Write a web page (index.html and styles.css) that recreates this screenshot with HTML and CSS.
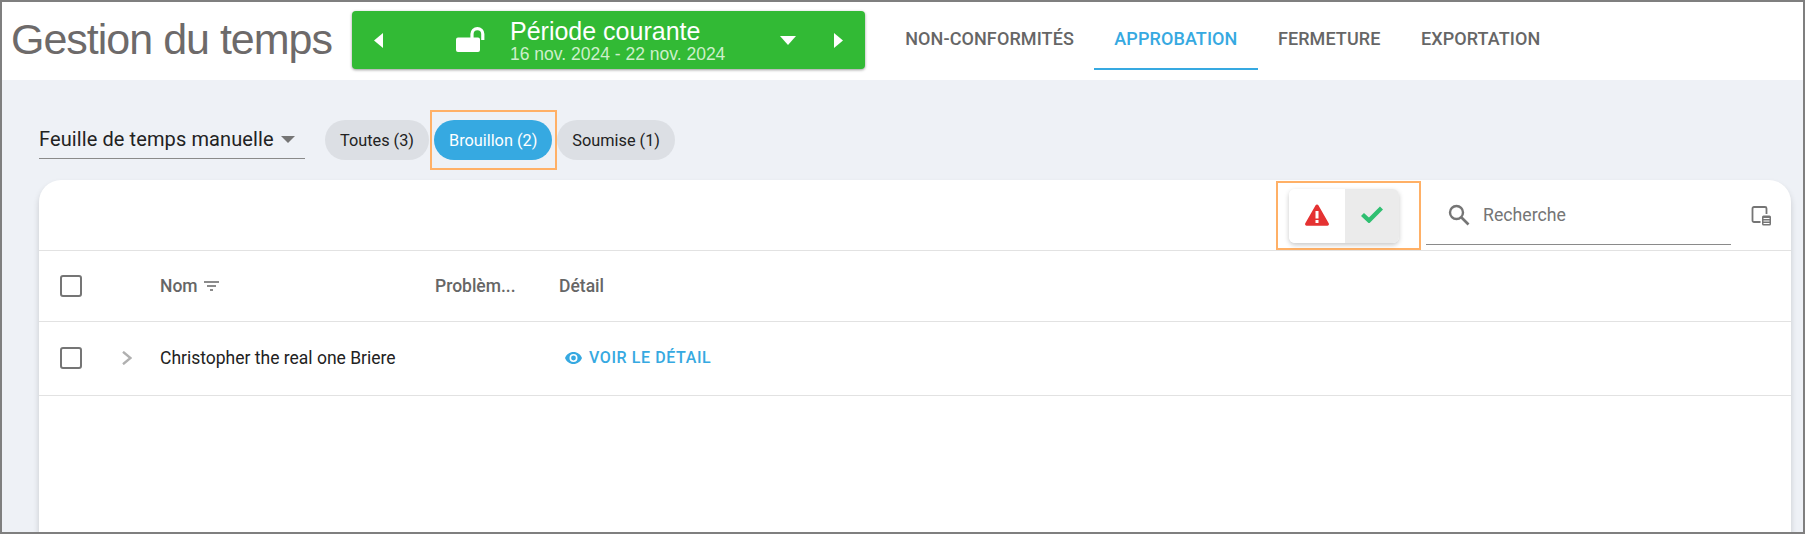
FILE: index.html
```html
<!DOCTYPE html>
<html lang="fr">
	<head>
		<meta charset="UTF-8" />
		<title>Gestion du temps</title>
		<link rel="stylesheet" href="styles.css">
	</head>

	<body>
		<div class="frame">
			<header class="top-bar">
				<h1 class="page-title">Gestion du temps</h1>

				<div class="period">
					<svg class="period-arrow" width="9" height="15" viewBox="0 0 9 15"><path d="M9 0v15L0 7.5z" fill="#fff"/></svg>
					<svg class="period-lock" width="29" height="25" viewBox="0 0 29 25"><path d="M2 10.500h20a2 2 0 0 1 2 2V23a2 2 0 0 1-2 2H2a2 2 0 0 1-2-2V12.500a2 2 0 0 1 2-2z" fill="#fff"/><path d="M16 11V7a5.200 5.200 0 0 1 10.800 0V13" fill="none" stroke="#fff" stroke-width="3.200"/></svg>
					<div class="period-text">
						<div class="period-name">Période courante</div>
						<div class="period-dates">16 nov. 2024 - 22 nov. 2024</div>
					</div>
					<svg class="period-down" width="16" height="9" viewBox="0 0 16 9"><path d="M0 0h16L8 9z" fill="#fff"/></svg>
					<svg class="period-arrow-right" width="9" height="15" viewBox="0 0 9 15"><path d="M0 0v15l9-7.5z" fill="#fff"/></svg>
				</div>

				<nav class="tabs">
					<a class="tab">NON-CONFORMITÉS</a>
					<a class="tab active">APPROBATION</a>
					<a class="tab">FERMETURE</a>
					<a class="tab">EXPORTATION</a>
				</nav>
			</header>

			<main class="content">
				<div class="filters">
					<div class="select">
						<span>Feuille de temps manuelle</span>
						<svg width="14" height="7" viewBox="0 0 14 7"><path d="M0 0h14L7 7z" fill="#757575"/></svg>
					</div>
					<button class="chip">Toutes (3)</button>
					<span class="highlight-box chip-box"><button class="chip chip-active">Brouillon (2)</button></span>
					<button class="chip">Soumise (1)</button>
				</div>

				<section class="card">
					<div class="card-tools">
						<div class="highlight-box tools-box">
							<div class="btn-group">
								<button class="group-btn">
									<svg class="warn-icon" width="24" height="22" viewBox="0 0 24 22"><path d="M12 0.5a1.6 1.6 0 0 1 1.4.8l10.3 18a1.6 1.6 0 0 1-1.4 2.4H1.7a1.6 1.6 0 0 1-1.4-2.4l10.3-18a1.6 1.6 0 0 1 1.4-.8z" fill="#e53232"/><rect x="10.5" y="7" width="3" height="7.5" fill="#fff"/><rect x="10.5" y="16" width="3" height="3" fill="#fff"/></svg>
								</button>
								<button class="group-btn group-btn-on">
									<svg class="check-icon" width="22" height="17" viewBox="0 0 22 17"><path d="M1.500 8.500l6.500 6L20.500 2" fill="none" stroke="#2fbf71" stroke-width="4.400"/></svg>
								</button>
							</div>
						</div>

						<div class="search">
							<svg width="22" height="22" viewBox="0 0 22 22"><circle cx="8.500" cy="8.500" r="6.500" fill="none" stroke="#757575" stroke-width="2.400"/><path d="M13.500 13.500l7 7" stroke="#757575" stroke-width="2.600"/></svg>
							<span>Recherche</span>
						</div>

						<svg class="columns-icon" width="21" height="20" viewBox="0 0 20 20"><path d="M9 16H2.500A1.500 1.500 0 0 1 1 14.500v-12A1.500 1.500 0 0 1 2.500 1h11A1.500 1.500 0 0 1 15 2.500V8" fill="none" stroke="#757575" stroke-width="1.800"/><rect x="10.500" y="9.500" width="9" height="10" rx="1.500" fill="#757575"/><path d="M12 12.500h6M12 15h6M12 17.500h6" stroke="#fff"/></svg>
					</div>

					<div class="table-row table-head">
						<span class="checkbox"></span>
						<span class="cell-name">Nom
							<svg width="15" height="10" viewBox="0 0 15 10"><path d="M0 1h15M3 5h9M6 9h3" stroke="#666" stroke-width="1.500"/></svg>
						</span>
						<span class="cell-problem">Problèm...</span>
						<span class="cell-detail">Détail</span>
					</div>

					<div class="table-row table-body">
						<span class="checkbox"></span>
						<svg class="chevron" width="10" height="14" viewBox="0 0 10 14"><path d="M1 .8L8.500 7 1 13.200" fill="none" stroke="#b0b0b0" stroke-width="2.400"/></svg>
						<span class="cell-name cell-person">Christopher the real one Briere</span>
						<a class="detail-link">
							<svg width="17" height="12" viewBox="0 0 17 12"><path d="M8.500 0C4.600 0 1.400 2.400 0 6c1.400 3.600 4.600 6 8.500 6s7.100-2.400 8.500-6c-1.400-3.600-4.600-6-8.500-6zm0 10a4 4 0 1 1 0-8 4 4 0 0 1 0 8zm0-6.400a2.400 2.400 0 1 0 0 4.800 2.400 2.400 0 0 0 0-4.800z" fill="#36a9e1"/></svg>
							VOIR LE DÉTAIL
						</a>
					</div>
				</section>
			</main>
		</div>
	</body>
</html>
```

FILE: styles.css
```css
* {
	box-sizing: border-box;
}

html,
body {
	margin: 0;
	height: 100%;
	overflow: hidden;
}

body {
	font-family: 'Roboto', 'Liberation Sans', sans-serif;
}

.frame {
	display: flex;
	flex-direction: column;
	height: 534px;
	border: 2px solid #7f7f7f;
	background: #eef1f6;
	overflow: hidden;
}

.top-bar {
	display: flex;
	flex: none;
	height: 78px;
	background: #fff;
}

.page-title {
	width: 350px;
	margin: 0;
	padding: 11px 0 0 9px;
	font-family: 'Liberation Sans', Arial, sans-serif;
	font-size: 43px;
	line-height: 52px;
	font-weight: normal;
	letter-spacing: -1px;
	color: #6d6a6a;
	white-space: nowrap;
}

.period {
	display: flex;
	align-items: center;
	width: 513px;
	height: 58px;
	margin-top: 9px;
	padding: 0 21px 0 22px;
	background: #32ba35;
	border-radius: 4px;
	box-shadow: 0 1px 3px rgba(0, 0, 0, 0.4);
	font-family: 'Liberation Sans', Arial, sans-serif;
	color: #fff;
}

.period-lock {
	margin: -2px 0 0 73px;
}

.period-text {
	width: 270px;
	margin-left: 25px;
	padding-top: 1px;
}

.period-name {
	font-size: 25px;
	line-height: 26px;
}

.period-dates {
	font-size: 17.500px;
	line-height: 20px;
	color: #cdefcb;
}

.period-arrow-right {
	margin-left: 38px;
}

.tabs {
	display: flex;
	margin-left: 20px;
	height: 68px;
}

.tab {
	display: flex;
	align-items: center;
	padding: 6px 20.200px 0;
	font-size: 18px;
	font-weight: 500;
	letter-spacing: 0.100px;
	color: #666;
	border-bottom: 2px solid transparent;
}

.tab.active {
	color: #36a9e1;
	border-bottom-color: #36a9e1;
}

.content {
	flex: 1;
	min-height: 0;
	padding: 0 12px 0 37px;
}

.filters {
	display: flex;
	align-items: flex-start;
	height: 100px;
	padding-top: 40px;
}

.select {
	display: flex;
	align-items: center;
	width: 266px;
	height: 39px;
	margin-right: 20px;
	border-bottom: 1px solid #8a8a8a;
	font-size: 20px;
	letter-spacing: 0.100px;
	color: #222;
}

.select svg {
	margin-left: 7px;
}

.chip {
	height: 40px;
	margin: 0;
	padding: 0 15px;
	border: none;
	border-radius: 20px;
	background: #dcdfe4;
	font-family: inherit;
	font-size: 16.300px;
	color: #222;
	white-space: nowrap;
}

.chip-active {
	background: #36a9e1;
	color: #fff;
}

.highlight-box {
	display: block;
	border: 2px solid #ffb066;
}

.chip-box {
	height: 60px;
	margin: -10px 0 0 1px;
	padding: 8px 3px 8px 2px;
}

.card {
	height: 400px;
	background: #fff;
	border-radius: 22px 22px 0 0;
	box-shadow: 0 4px 6px rgba(0, 0, 0, 0.16);
}

.card-tools {
	display: flex;
	align-items: flex-start;
	height: 71px;
	padding-left: 1237px;
	border-bottom: 1px solid #e2e2e2;
}

.tools-box {
	flex: none;
	width: 145px;
	height: 69px;
	margin-top: 1px;
	padding: 6px 0 0 11px;
}

.btn-group {
	display: flex;
	width: 110px;
	height: 54px;
	border-radius: 6px;
	overflow: hidden;
	box-shadow: 0 2px 5px rgba(0, 0, 0, 0.22);
}

.group-btn {
	display: flex;
	align-items: center;
	justify-content: center;
	flex: none;
	width: 56px;
	padding: 0;
	border: none;
	background: #fff;
}

.group-btn-on {
	width: 54px;
	background: #ebebeb;
}

.warn-icon {
	margin-top: -3px;
}

.check-icon {
	margin-top: -3px;
}

.search {
	display: flex;
	align-items: center;
	flex: none;
	width: 305px;
	height: 65px;
	margin-left: 5px;
	padding: 6px 0 0 22px;
	border-bottom: 1px solid #8a8a8a;
	font-size: 17.700px;
	color: #757575;
}

.search span {
	margin-left: 13px;
}

.columns-icon {
	flex: none;
	margin: 26px 0 0 20px;
}

.table-row {
	display: flex;
	align-items: center;
	padding-left: 21px;
	border-bottom: 1px solid #e2e2e2;
	font-size: 17.500px;
}

.table-head {
	height: 71px;
	font-weight: 500;
	color: #666;
}

.table-body {
	height: 74px;
	padding-bottom: 2px;
	color: #222;
}

.checkbox {
	flex: none;
	width: 22px;
	height: 22px;
	margin-right: 78px;
	border: 2px solid #757575;
	border-radius: 3px;
}

.cell-name {
	display: flex;
	align-items: center;
	gap: 6px;
	width: 275px;
}

.cell-problem {
	width: 124px;
}

.chevron {
	margin: 0 28px 0 -38px;
}

.cell-person {
	width: 405px;
}

.detail-link {
	display: flex;
	align-items: center;
	gap: 7px;
	font-size: 16px;
	font-weight: 500;
	letter-spacing: 0.600px;
	color: #36a9e1;
}
```
